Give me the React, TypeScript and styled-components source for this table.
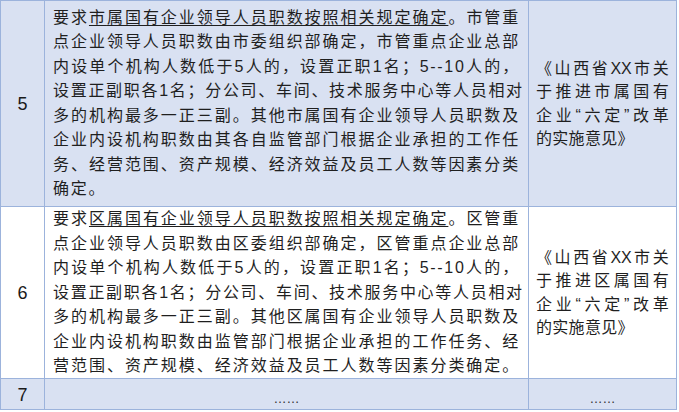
import React from "react";
import styled, { createGlobalStyle } from "styled-components";

const GlobalStyle = createGlobalStyle`
  html, body { margin: 0; padding: 0; background: #ffffff; }
  body { font-family: "Liberation Sans", "Noto Sans CJK SC", sans-serif; color: #1f1f1f; }
`;

const BORDER = "#9cb3dc";
const SHADE = "#d9e1f2";

const Table = styled.div`
  display: flex;
  flex-direction: column;
  width: 677px;
  box-sizing: border-box;
  border-top: 1px solid ${BORDER};
  border-left: 1px solid ${BORDER};
`;

const Row = styled.div<{ $h: number; $shade?: boolean }>`
  display: grid;
  grid-template-columns: 44px 484px 148px;
  height: ${(p) => p.$h}px;
  box-sizing: border-box;
  border-bottom: 1px solid ${BORDER};
  background: ${(p) => (p.$shade ? SHADE : "#ffffff")};
`;

const Cell = styled.div`
  border-right: 1px solid ${BORDER};
  display: flex;
  flex-direction: column;
  justify-content: center;
  min-width: 0;
`;

const NumCell = styled(Cell)`
  align-items: center;
  font-size: 18px;
  color: #1a1a1a;
  padding-top: 2px;
`;

const BodyCell = styled(Cell)`
  padding: 0 8px 0 8px;
  font-size: 16px;
  line-height: 24.5px;
  letter-spacing: 1.7px;
`;

const SourceCell = styled(Cell)`
  padding: 0 7px 0 7px;
  font-size: 16px;
  line-height: 23.5px;
  letter-spacing: 0.3px;
`;

const Line = styled.div<{ $last?: boolean }>`
  text-align: justify;
  text-align-last: ${(p) => (p.$last ? "left" : "justify")};
  white-space: nowrap;
`;

const Under = styled.span`
  text-decoration: underline;
  text-underline-offset: 2px;
  text-decoration-thickness: 1px;
`;

const Tight = styled.span`
  display: inline-block;
  letter-spacing: 0;
`;

const Dots = styled.div`
  align-self: center;
  font-family: "Liberation Sans", sans-serif;
  font-size: 13px;
  letter-spacing: 0;
  color: #333;
  padding-top: 8px;
`;

type Entry = {
  no: string;
  h: number;
  shade: boolean;
  scope: string;
  lines: string[];
  last: boolean;
};

const entries: Entry[] = [
  {
    no: "5",
    h: 206,
    shade: true,
    scope: "市",
    lines: [
      "点企业领导人员职数由市委组织部确定，市管重点企业总部",
      "内设单个机构人数低于5人的，设置正职1名；5--10人的，",
      "设置正副职各1名；分公司、车间、技术服务中心等人员相对",
      "多的机构最多一正三副。其他市属国有企业领导人员职数及",
      "企业内设机构职数由其各自监管部门根据企业承担的工作任",
      "务、经营范围、资产规模、经济效益及员工人数等因素分类",
      "确定。",
    ],
    last: true,
  },
  {
    no: "6",
    h: 172,
    shade: false,
    scope: "区",
    lines: [
      "点企业领导人员职数由区委组织部确定，区管重点企业总部",
      "内设单个机构人数低于5人的，设置正职1名；5--10人的，",
      "设置正副职各1名；分公司、车间、技术服务中心等人员相对",
      "多的机构最多一正三副。其他区属国有企业领导人员职数及",
      "企业内设机构职数由监管部门根据企业承担的工作任务、经",
      "营范围、资产规模、经济效益及员工人数等因素分类确定。",
    ],
    last: false,
  },
];

function Source({ scope }: { scope: string }) {
  return (
    <SourceCell>
      <Line>
        《山西省<Tight>XX</Tight>市关
      </Line>
      <Line>于推进{scope}属国有</Line>
      <Line>企业“六定”改革</Line>
      <Line $last>的实施意见》</Line>
    </SourceCell>
  );
}

export default function App() {
  return (
    <>
      <GlobalStyle />
      <Table lang="zh-CN">
        {entries.map((e) => (
          <Row key={e.no} $h={e.h} $shade={e.shade}>
            <NumCell>{e.no}</NumCell>
            <BodyCell>
              <Line>
                要求<Under>{e.scope}属国有企业领导人员职数按照相关规定确定</Under>。{e.scope}管重
              </Line>
              {e.lines.map((l, i) => (
                <Line key={i} $last={e.last && i === e.lines.length - 1}>
                  {l}
                </Line>
              ))}
            </BodyCell>
            <Source scope={e.scope} />
          </Row>
        ))}
        <Row $h={31} $shade>
          <NumCell>7</NumCell>
          <Cell>
            <Dots>……</Dots>
          </Cell>
          <Cell>
            <Dots>……</Dots>
          </Cell>
        </Row>
      </Table>
    </>
  );
}
